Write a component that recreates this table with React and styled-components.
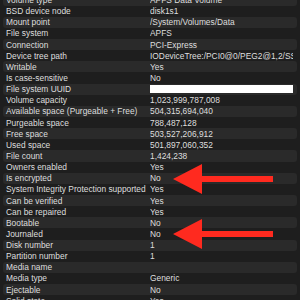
import React from 'react';
import styled, { createGlobalStyle } from 'styled-components';

const GlobalStyle = createGlobalStyle`
  html, body {
    margin: 0;
    padding: 0;
    background-color: #1e1e1e;
    overflow: hidden;
  }
`;

const Page = styled.div`
  position: relative;
  width: 300px;
  height: 300px;
  overflow: hidden;
  background-color: #1e1e1e;
  font-family: "Liberation Sans", Arial, sans-serif;
  font-size: 8.4px;
  color: #dedede;
`;

const List = styled.div`
  margin-top: -5.6px;
  padding: 0 3px;
`;

const Row = styled.div`
  display: grid;
  grid-template-columns: 147px 143px;
  align-items: center;
  height: 11.15px;
  border-radius: 3px;
  background-color: ${(p) => (p.$striped ? '#2a2a2a' : 'transparent')};
`;

const Label = styled.div`
  padding-left: 3px;
  white-space: nowrap;
  overflow: hidden;
`;

const Value = styled.div`
  white-space: nowrap;
  overflow: hidden;
`;

const Redacted = styled.div`
  width: 147px;
  height: 8px;
  margin-left: -4px;
  background-color: #ffffff;
`;

const Arrow = styled.svg`
  position: absolute;
  left: 172px;
  width: 102px;
  height: 30px;
  top: ${(p) => p.$top}px;
`;

const rows = [
  ['Volume type', 'APFS Data Volume'],
  ['BSD device node', 'disk1s1'],
  ['Mount point', '/System/Volumes/Data'],
  ['File system', 'APFS'],
  ['Connection', 'PCI-Express'],
  ['Device tree path', 'IODeviceTree:/PCI0@0/PEG2@1,2/SSD0@0/PRT0@0/PMP@0'],
  ['Writable', 'Yes'],
  ['Is case-sensitive', 'No'],
  ['File system UUID', null],
  ['Volume capacity', '1,023,999,787,008'],
  ['Available space (Purgeable + Free)', '504,315,694,040'],
  ['Purgeable space', '788,487,128'],
  ['Free space', '503,527,206,912'],
  ['Used space', '501,897,060,352'],
  ['File count', '1,424,238'],
  ['Owners enabled', 'Yes'],
  ['Is encrypted', 'No'],
  ['System Integrity Protection supported', 'Yes'],
  ['Can be verified', 'Yes'],
  ['Can be repaired', 'Yes'],
  ['Bootable', 'No'],
  ['Journaled', 'No'],
  ['Disk number', '1'],
  ['Partition number', '1'],
  ['Media name', ''],
  ['Media type', 'Generic'],
  ['Ejectable', 'No'],
  ['Solid state', 'Yes'],
];

function RedArrow({ top }) {
  return (
    <Arrow $top={top} viewBox="0 0 102 30">
      <polygon
        points="1,15 30,0 30,12 101,12 101,18 30,18 30,30"
        fill="#ff2a1f"
      />
    </Arrow>
  );
}

export default function App() {
  return (
    <Page>
      <GlobalStyle />
      <List>
        {rows.map(([label, value], i) => (
          <Row key={label} $striped={i % 2 === 0}>
            <Label>{label}</Label>
            <Value>{value === null ? <Redacted /> : value}</Value>
          </Row>
        ))}
      </List>
      <RedArrow top={164} />
      <RedArrow top={219} />
    </Page>
  );
}
